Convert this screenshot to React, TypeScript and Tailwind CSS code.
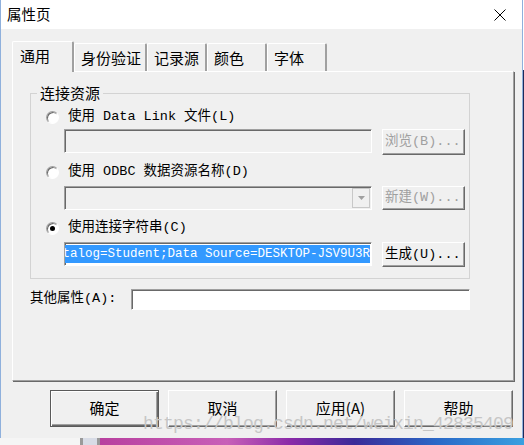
const mono = "font-['Liberation_Mono','Noto_Sans_CJK_SC',monospace]";
const sans = "font-['Noto_Sans_CJK_SC','Liberation_Sans',sans-serif]";

const raised =
  "border border-t-white border-l-white border-r-[#696969] border-b-[#696969] shadow-[inset_-1px_-1px_0_#a0a0a0] bg-[#f0f0f0]";
const sunken =
  "border border-t-[#a0a0a0] border-l-[#a0a0a0] border-r-white border-b-white shadow-[inset_1px_1px_0_#696969]";

function Radio({ checked }: { checked?: boolean }) {
  return (
    <span className="flex h-[13px] w-[13px] shrink-0 items-center justify-center rounded-full border border-t-[#a0a0a0] border-l-[#a0a0a0] border-r-white border-b-white bg-white shadow-[inset_1px_1px_0_#696969]">
      {checked && <span className="h-[5px] w-[5px] rounded-full bg-black" />}
    </span>
  );
}

function SideButton({ label, disabled }: { label: string; disabled?: boolean }) {
  return (
    <div
      className={`${raised} ${mono} flex h-full w-[83px] items-center pl-[2px] text-[13.5px] leading-none ${
        disabled ? "text-[#a0a0a0]" : "text-black"
      }`}
    >
      {label}
    </div>
  );
}

function Tab({ label, active, w }: { label: string; active?: boolean; w: string }) {
  if (active) {
    return (
      <div
        className={`${w} relative z-10 -mb-px h-[31px] shrink-0 rounded-t-[2px] border-t border-l border-white border-r-2 border-r-[#a0a0a0] bg-[#f0f0f0] pl-[7px] pt-[4px] text-[15px] leading-[20px] text-black`}
      >
        {label}
      </div>
    );
  }
  return (
    <div
      className={`${w} h-[28px] shrink-0 rounded-t-[2px] border-t border-l border-white border-r-2 border-r-[#a0a0a0] bg-[#f0f0f0] pl-[6px] pt-[4px] text-[15px] leading-[20px] text-black`}
    >
      {label}
    </div>
  );
}

function DialogButton({ label, primary }: { label: string; primary?: boolean }) {
  return (
    <div
      className={
        primary
          ? "flex h-[37px] w-[109px] items-center justify-center border border-[#5a5a5a] bg-[#f0f0f0] shadow-[inset_1px_1px_0_#fff,inset_-1px_-1px_0_#696969,inset_-2px_-2px_0_#a0a0a0] text-[15px] text-black"
          : "flex h-[37px] w-[109px] items-center justify-center border border-t-white border-l-white border-r-[#696969] border-b-[#696969] bg-[#f0f0f0] shadow-[inset_-1px_-1px_0_#a0a0a0] text-[15px] text-black"
      }
    >
      {label}
    </div>
  );
}

export default function App() {
  return (
    <div className={`${sans} relative flex h-[445px] w-[524px] flex-col overflow-hidden bg-white`}>
      <div className="flex h-[438px]">
        {/* dialog */}
        <div className="flex h-full w-[523px] flex-col border-x border-[#8fb0dc] bg-[#f0f0f0]">
          <div className="flex h-[29px] items-center justify-between bg-white pl-[6px] pr-[16px]">
            <span className="text-[14.5px] leading-none text-black">属性页</span>
            <svg width="12" height="12" viewBox="0 0 12 12" className="block">
              <path d="M0.5 0.5 L11.5 11.5 M11.5 0.5 L0.5 11.5" stroke="#000" strokeWidth="1" />
            </svg>
          </div>

          <div className="flex flex-col pl-[11px] pt-[12px]">
            <div className="flex h-[30px] items-end">
              <Tab label="通用" active w="w-[62px]" />
              <Tab label="身份验证" w="w-[73px]" />
              <Tab label="记录源" w="w-[60px]" />
              <Tab label="颜色" w="w-[60px]" />
              <Tab label="字体" w="w-[60px]" />
            </div>

            <div className="flex h-[310px] w-[502px] flex-col border border-t-white border-l-white border-r-[#a0a0a0] border-b-[#a0a0a0] shadow-[1px_1px_0_#696969]">
              <fieldset className="ml-[17px] mt-[11px] w-[440px] border border-[#d3d3d3] pb-[11px]">
                <legend className="ml-[6px] px-[3px] text-[15px] leading-[20px] text-black">连接资源</legend>

                <div className={`${mono} mt-[4px] flex h-[20px] items-center gap-[9px] pl-[15px] text-[13.5px] text-black`}>
                  <Radio />
                  <span>使用 Data Link 文件(L)</span>
                </div>
                <div className="mt-[2px] flex h-[26px] items-start gap-[10px] pl-[33px]">
                  <div className={`${sunken} h-[24px] w-[308px] bg-[#f0f0f0]`} />
                  <SideButton label="浏览(B)..." disabled />
                </div>

                <div className={`${mono} mt-[7px] flex h-[20px] items-center gap-[9px] pl-[15px] text-[13.5px] text-black`}>
                  <Radio />
                  <span>使用 ODBC 数据资源名称(D)</span>
                </div>
                <div className="mt-[4px] flex h-[24px] items-start gap-[10px] pl-[33px]">
                  <div className={`${sunken} flex h-[24px] w-[308px] justify-end bg-[#f0f0f0] p-[1px]`}>
                    <div className="flex h-full w-[18px] items-center justify-center border border-[#c8c8c8] bg-[#f0f0f0]">
                      <svg width="7" height="4" viewBox="0 0 7 4" className="block">
                        <path d="M0 0 H7 L3.5 4 Z" fill="#a0a0a0" />
                      </svg>
                    </div>
                  </div>
                  <SideButton label="新建(W)..." disabled />
                </div>

                <div className={`${mono} mt-[8px] flex h-[20px] items-center gap-[9px] pl-[15px] text-[13.5px] text-black`}>
                  <Radio checked />
                  <span>使用连接字符串(C)</span>
                </div>
                <div className="mt-[4px] flex h-[25px] items-start gap-[10px] pl-[33px]">
                  <div className={`${sunken} flex h-[24px] w-[308px] items-center justify-end overflow-hidden bg-white px-[1px]`}>
                    <span className={`${mono} shrink-0 whitespace-nowrap bg-[#3399ff] text-[12.5px] leading-[18px] text-white`}>
                      Initial Catalog=Student;Data Source=DESKTOP-JSV9U3R
                    </span>
                  </div>
                  <SideButton label="生成(U)..." />
                </div>
              </fieldset>

              <div className="ml-[17px] mt-[10px] flex items-center">
                <span className={`${mono} w-[101px] text-[13.5px] text-black`}>其他属性(A):</span>
                <div className={`${sunken} h-[21px] w-[339px] bg-white`} />
              </div>
            </div>

            <div className="ml-[38px] mt-[9px] flex gap-[9px]">
              <DialogButton label="确定" primary />
              <DialogButton label="取消" />
              <DialogButton label="应用(A)" />
              <DialogButton label="帮助" />
            </div>
          </div>
        </div>
        <div className="flex w-[1px] flex-col">
          <div className="h-[70px] bg-white" />
          <div className="flex-1 bg-[#1c2a5a]" />
        </div>
      </div>

      {/* desktop strip under the dialog */}
      <div className="flex h-[7px]">
        <div className="w-[80px] bg-[#f5f5f5]" />
        <div className="w-[3px] bg-[#9a9a9a]" />
        <div className="w-[14px] bg-[#d8dce6]" />
        <div className="w-[3px] bg-[#9a9a9a]" />
        <div className="flex-1 bg-[linear-gradient(90deg,#b8409f_0%,#c860b8_30%,#8a2aa8_45%,#3a2a98_60%,#2a6ac8_80%,#3aa0e0_100%)]" />
      </div>

      <div className="pointer-events-none absolute left-[143px] top-[413px] whitespace-nowrap font-['Liberation_Mono',monospace] text-[18px] leading-[22px] tracking-[-0.8px] text-[#c6c6c6]">
        https://blog.csdn.net/weixin_42835409
      </div>
    </div>
  );
}
